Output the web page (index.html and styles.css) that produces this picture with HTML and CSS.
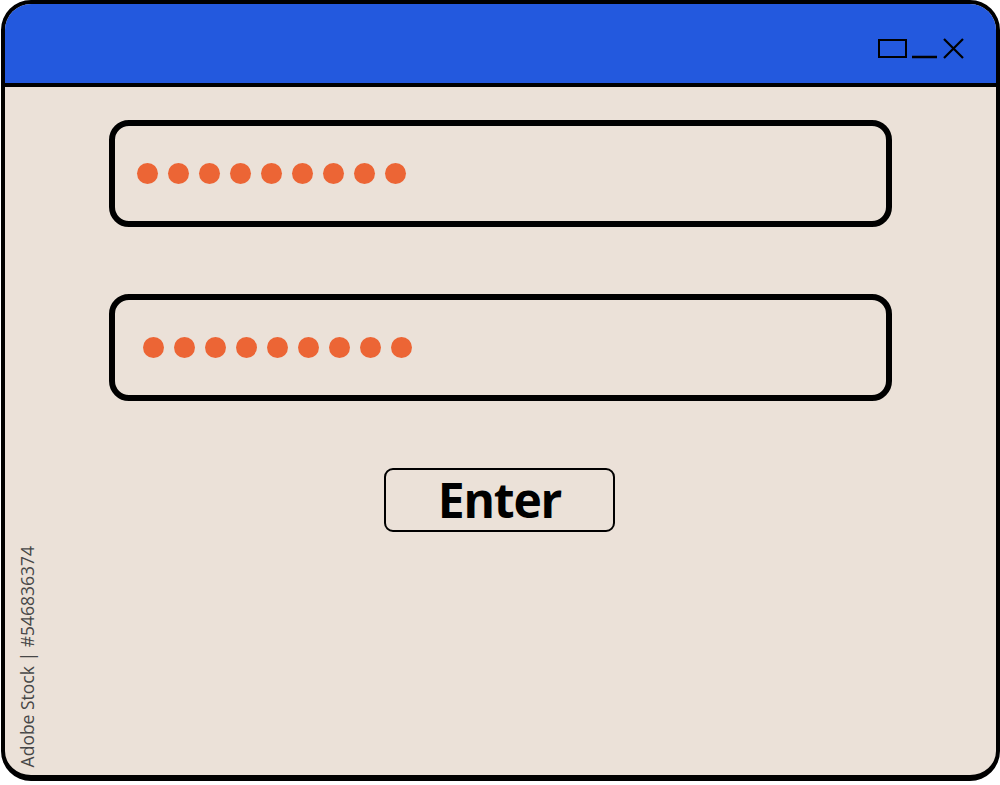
FILE: index.html
```html
<!DOCTYPE html>
<html lang="en">
<head>
    <meta charset="UTF-8">
    <title>Login Window</title>
    <link rel="stylesheet" href="styles.css">
</head>
<body>
    <div class="window">
        <div class="titlebar">
            <div class="controls">
                <svg width="90" height="24" viewBox="0 0 90 24">
                    <rect x="3" y="4" width="27" height="17" fill="none" stroke="#000" stroke-width="2"/>
                    <line x1="36" y1="21" x2="61" y2="21" stroke="#000" stroke-width="2.4"/>
                    <path d="M68 3 L87 22 M87 3 L68 22" stroke="#000" stroke-width="2.2" fill="none"/>
                </svg>
            </div>
        </div>

        <div class="content">
            <div class="field field-first">
                <span class="dot"></span><span class="dot"></span><span class="dot"></span>
                <span class="dot"></span><span class="dot"></span><span class="dot"></span>
                <span class="dot"></span><span class="dot"></span><span class="dot"></span>
            </div>
            <div class="field field-second">
                <span class="dot"></span><span class="dot"></span><span class="dot"></span>
                <span class="dot"></span><span class="dot"></span><span class="dot"></span>
                <span class="dot"></span><span class="dot"></span><span class="dot"></span>
            </div>
            <button class="btn">Enter</button>
        </div>

        <div class="stock-id">Adobe Stock | #546836374</div>
    </div>
</body>
</html>
```

FILE: styles.css
```css
body {
    margin: 0;
    background: #fff;
    font-family: "Open Sans", Arial, sans-serif;
}

.window {
    position: relative;
    box-sizing: border-box;
    width: 999px;
    height: 781px;
    margin: 0 0 0 1px;
    border: 4px solid #000;
    border-bottom-width: 6px;
    border-radius: 30px;
    background: #ebe1d8;
    overflow: hidden;
}

.titlebar {
    height: 79px;
    background: #2359de;
    border-bottom: 4px solid #000;
    display: flex;
    justify-content: flex-end;
    align-items: center;
}

.controls {
    margin-right: 30px;
    margin-top: 9px;
    display: flex;
}

.content {
    display: flex;
    flex-direction: column;
    align-items: flex-start;
    padding: 33px 0 0 104px;
    gap: 67px;
}

.field {
    box-sizing: border-box;
    width: 783px;
    height: 107px;
    border: 6px solid #000;
    border-radius: 20px;
    display: flex;
    align-items: center;
    gap: 10px;
}

.field-first {
    padding-left: 22px;
}

.field-second {
    padding-left: 28px;
}

.dot {
    width: 21px;
    height: 21px;
    border-radius: 50%;
    background: #ec6535;
}

.btn {
    box-sizing: border-box;
    width: 231px;
    height: 64px;
    margin-left: 275px;
    background: transparent;
    border: 2px solid #000;
    border-radius: 9px;
    font-family: "Open Sans", Arial, sans-serif;
    font-weight: 700;
    font-size: 48px;
    letter-spacing: -1.2px;
    line-height: 1;
    color: #000;
    padding: 0 0 1px;
    cursor: pointer;
}

.stock-id {
    position: absolute;
    left: 10px;
    bottom: 8px;
    writing-mode: vertical-rl;
    transform: rotate(180deg);
    font-size: 17.5px;
    color: #474747;
}
```
